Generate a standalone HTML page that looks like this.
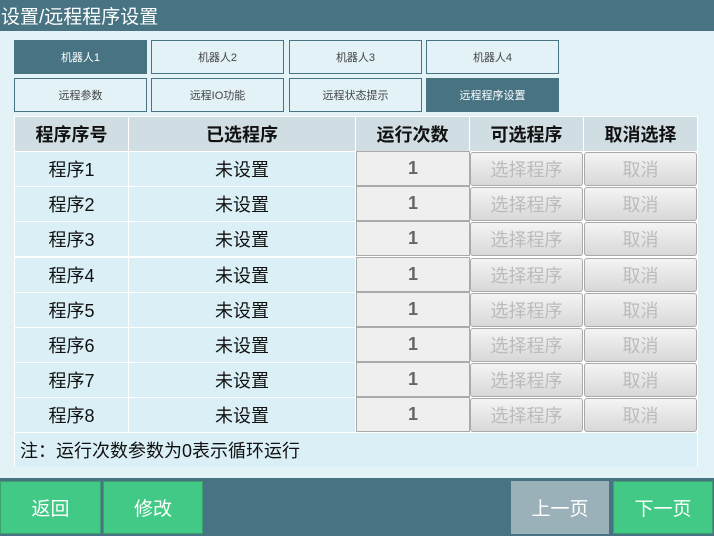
<!DOCTYPE html><html><head><meta charset="utf-8"><style>
*{margin:0;padding:0;box-sizing:border-box}
body{width:714px;height:536px;overflow:hidden;background:#e2f2f7;font-family:"Liberation Sans","Noto Sans CJK SC",sans-serif;position:relative}
.a{position:absolute;display:flex;align-items:center;justify-content:center}
.hd{left:0;top:0;width:714px;height:31px;background:#477382;color:#fff;font-size:19px;justify-content:flex-start;padding-left:1px}
.tab{border:1px solid #477382;background:#e2f2f7;color:#444;font-size:11px;height:34px;width:133px}
.tab.on{background:#477382;color:#fff}
.th{background:#d0dde2;font-weight:bold;font-size:18px;color:#111;height:34px}
.td{background:#daf0f6;font-size:18px;color:#111;height:34px}
.n{background:#efefef;border:1px solid #aaa;font-weight:bold;color:#666;font-size:18px;height:35px}
.b{background:linear-gradient(#f4f4f4,#d8d8d8);border:1px solid #aaa;border-radius:3px;color:#bbb;font-size:18px;height:34px}
.bar{left:0;top:478px;width:714px;height:58px;background:#477382}
.g{background:#42c985;color:#fff;font-size:19px;top:481px;height:53px;border:1px solid #3aa06c}
</style></head><body>
<div class="a hd">设置/远程程序设置</div>
<div class="a tab on" style="left:14px;top:40px">机器人1</div>
<div class="a tab" style="left:151px;top:40px">机器人2</div>
<div class="a tab" style="left:289px;top:40px">机器人3</div>
<div class="a tab" style="left:426px;top:40px">机器人4</div>
<div class="a tab" style="left:14px;top:78px">远程参数</div>
<div class="a tab" style="left:151px;top:78px">远程IO功能</div>
<div class="a tab" style="left:289px;top:78px">远程状态提示</div>
<div class="a tab on" style="left:426px;top:78px">远程程序设置</div>
<div style="position:absolute;left:14px;top:116px;width:684px;height:351px;background:#fff"></div>
<div class="a th" style="left:15px;top:117px;width:113px">程序序号</div>
<div class="a th" style="left:129px;top:117px;width:226px">已选程序</div>
<div class="a th" style="left:356px;top:117px;width:113px">运行次数</div>
<div class="a th" style="left:470px;top:117px;width:113px">可选程序</div>
<div class="a th" style="left:584px;top:117px;width:113px">取消选择</div>
<div id="rows"></div>
<script>
var h='';for(var i=0;i<8;i++){var y=152+i*35.2;
h+='<div class="a td" style="left:15px;top:'+y+'px;width:113px">程序'+(i+1)+'</div>'+
'<div class="a td" style="left:129px;top:'+y+'px;width:226px">未设置</div>'+
'<div class="a n" style="left:356px;top:'+(y-1)+'px;width:114px">1</div>'+
'<div class="a b" style="left:470px;top:'+y+'px;width:113px">选择程序</div>'+
'<div class="a b" style="left:584px;top:'+y+'px;width:113px">取消</div>';}
document.getElementById('rows').innerHTML=h;
</script>
<div class="a td" style="left:15px;top:433px;width:682px;justify-content:flex-start;padding-left:5px">注：运行次数参数为0表示循环运行</div>
<div class="a bar"></div>
<div class="a g" style="left:0;width:101px">返回</div>
<div class="a g" style="left:103px;width:100px">修改</div>
<div class="a g" style="left:511px;width:98px;background:#9ab1b9;border-color:#9ab1b9">上一页</div>
<div class="a g" style="left:613px;width:100px">下一页</div>
</body></html>
